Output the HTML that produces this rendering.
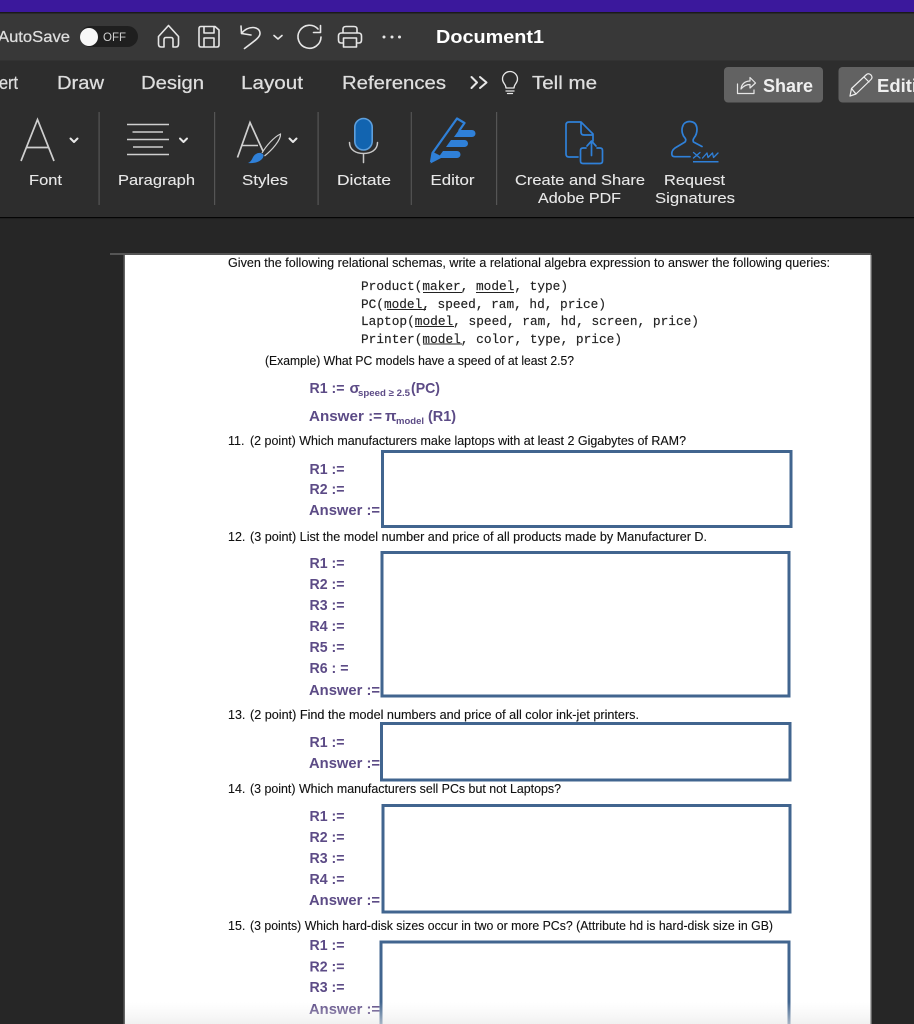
<!DOCTYPE html>
<html>
<head>
<meta charset="utf-8">
<style>
html,body{margin:0;padding:0;background:#262626;width:914px;height:1024px;overflow:hidden}
svg{display:block}
text{font-family:"Liberation Sans",sans-serif;white-space:pre}
.t{fill:#dedede;stroke:#dedede;stroke-width:.25;font-size:18px}
.l{fill:#e8e8e8;font-size:15px;stroke:#e8e8e8;stroke-width:.1}
.d{fill:#111;font-size:12.5px;stroke:#111;stroke-width:.12}
.m{fill:#222;font-family:"Liberation Mono",monospace;font-size:12.8px;stroke:#222;stroke-width:.15}
.p{fill:#5c4b86;font-size:15px;font-weight:bold}
.b{fill:none;stroke:#41658f;stroke-width:3}
.i{fill:none;stroke:#e6e6e6;stroke-width:1.6;stroke-linecap:round;stroke-linejoin:round}
.c{fill:none;stroke:#e8e8e8;stroke-width:2;stroke-linecap:round;stroke-linejoin:round}
.a{fill:none;stroke:#2f80d8;stroke-width:1.7;stroke-linecap:round;stroke-linejoin:round}
</style>
</head>
<body>
<svg width="914" height="1024" viewBox="0 0 914 1024" xmlns="http://www.w3.org/2000/svg">
<defs>
<linearGradient id="fade" x1="0" y1="0" x2="0" y2="1"><stop offset="0" stop-color="#eee" stop-opacity="0"/><stop offset="1" stop-color="#e8e8e8" stop-opacity=".6"/></linearGradient>
</defs>
<rect width="914" height="1024" fill="#262626"/>
<rect width="914" height="12" fill="#3b189c"/>
<rect y="12" width="914" height="1.5" fill="#1a1a1a"/>
<rect y="13.5" width="914" height="47" fill="#383838"/>
<rect y="60.5" width="914" height="157" fill="#2d2d2d"/>
<rect y="217" width="914" height="1.2" fill="#050505"/>

<!-- title bar -->
<text x="-2" y="42" class="t" style="font-size:16px" textLength="72" lengthAdjust="spacingAndGlyphs">AutoSave</text>
<rect x="80" y="26" width="58" height="21" rx="10.5" fill="#1f1f1f"/>
<circle cx="89" cy="37" r="9" fill="#f8f8f8"/>
<text x="103" y="41" style="font-size:12px;fill:#d0d0d0" textLength="23" lengthAdjust="spacingAndGlyphs">OFF</text>
<path class="i" d="M161 47Q158.500 47 158.500 44V36.500L168.500 25.500L178.500 36.500V44Q178.500 47 176 47H173V39.500Q173 37.500 171 37.500H166Q164 37.500 164 39.500V47Z"/>
<path class="i" d="M201 26.500H215L219 30V45Q219 47 217 47H201Q199 47 199 45V28.500Q199 26.500 201 26.500ZM204 27V33H214V27M204 47V38H214V47"/>
<path class="i" d="M241 26L241.500 33.500L251 35M241.500 33.500C248 25 260 26 260 33.500C260 37 256 40 244.500 48.500"/>
<path class="c" d="M274 35.500L278 39L282 35.500" style="stroke-width:1.6"/>
<path class="i" d="M318 29A11.500 11.500 0 1 0 321 37M320.500 25.500V32.500H313.500"/>
<path class="i" d="M343 33V29Q343 26.500 346 26.500H354Q357 26.500 357 29V33M343 43H341Q338.500 43 338.500 40V36Q338.500 33 341.500 33H358.500Q361.500 33 361.500 36V40Q361.500 43 359 43H357M343.500 38H356.500V47H343.500Z"/>
<circle cx="384" cy="37" r="1.500" fill="#e6e6e6"/><circle cx="392" cy="37" r="1.500" fill="#e6e6e6"/><circle cx="399.500" cy="37" r="1.500" fill="#e6e6e6"/>
<text x="436" y="43" style="font-size:18px;font-weight:bold;fill:#fff" textLength="108" lengthAdjust="spacingAndGlyphs">Document1</text>

<!-- tabs -->
<text x="-1" y="89" class="t" textLength="19" lengthAdjust="spacingAndGlyphs">ert</text>
<text x="57" y="89" class="t" textLength="47" lengthAdjust="spacingAndGlyphs">Draw</text>
<text x="141" y="89" class="t" textLength="63" lengthAdjust="spacingAndGlyphs">Design</text>
<text x="241" y="89" class="t" textLength="62" lengthAdjust="spacingAndGlyphs">Layout</text>
<text x="342" y="89" class="t" textLength="104" lengthAdjust="spacingAndGlyphs">References</text>
<path class="c" d="M471.500 77L477 82.500L471.500 88M480 77L486.500 82.500L480 88"/>
<path class="i" d="M506 88C506 84 502.500 83.500 502.500 79A7.500 7.500 0 0 1 517.500 79C517.500 83.500 514 84 514 88ZM506 91H514M507.500 93.500H512.500" style="stroke-width:1.3"/>
<text x="532" y="89" class="t" textLength="65" lengthAdjust="spacingAndGlyphs">Tell me</text>
<rect x="724" y="67" width="99" height="35.500" rx="4" fill="#626262"/>
<rect x="838.500" y="67" width="90" height="35.500" rx="4" fill="#626262"/>
<path class="i" d="M737.500 84V93.500H754V90M741 89C741.500 84 745 81 750 81V77.500L755.500 83L750 88V84.500C746.500 84.500 743.500 86 741 89Z" style="stroke-width:1.2"/>
<text x="763" y="92" class="t" style="fill:#efefef;font-weight:bold;stroke:none" textLength="50" lengthAdjust="spacingAndGlyphs">Share</text>
<path class="i" d="M850 96L851.500 88.500L866.500 74.500Q868.500 72.800 871 75Q873 77.500 871 79.500L856 94ZM851.500 88.500L856 94M864 77L869 82" style="stroke-width:1.2;stroke:#eee"/>
<text x="877" y="92" class="t" style="fill:#efefef;font-weight:bold;stroke:none" textLength="40" lengthAdjust="spacingAndGlyphs">Editi</text>

<!-- separators -->
<g fill="#555"><rect x="98.500" y="112" width="1.2" height="93"/><rect x="214" y="112" width="1.2" height="93"/><rect x="317.500" y="112" width="1.2" height="93"/><rect x="410.700" y="112" width="1.2" height="93"/><rect x="496" y="112" width="1.2" height="93"/></g>

<!-- ribbon icons -->
<path d="M21 161L37.500 119.500L54 161M26.500 147.500H48.500" fill="none" stroke="#cfcfcf" stroke-width="1.7"/>
<path class="c" d="M70.500 138.500L74 142L77.500 138.500"/>
<g stroke="#cfcfcf" stroke-width="1.500"><path d="M127 124.500H169M132.500 132H163M127 139.500H169M133 147H163M127 154.500H169"/></g>
<path class="c" d="M180 138.500L183.500 142L187 138.500"/>
<path d="M237.500 157.500L250 122.500L263 151" fill="none" stroke="#cfcfcf" stroke-width="1.700"/>
<path d="M241 145.500H258" stroke="#cfcfcf" stroke-width="1.500"/>
<path d="M262 153C266 146 274 137 280.500 134C281 140 272 150 264.500 156" fill="#2d2d2d" stroke="#cfcfcf" stroke-width="1.200"/>
<path d="M248 163C253 161 252 156 256 154C259 152 262.500 153 263.500 155C264 160 256 164 248 163Z" fill="#2f80d8"/>
<path class="c" d="M289.500 138.500L293 142L296.500 138.500"/>
<rect x="354.800" y="118.500" width="17.400" height="31.500" rx="8.700" fill="#1264b0" stroke="#5e9fdc" stroke-width="1.600"/>
<path d="M349.500 142.500C349.500 150 356 153.500 363.500 153.500C371 153.500 377.500 150 377.500 142.500M363.500 153.500V162.500" fill="none" stroke="#c8c8c8" stroke-width="1.500" stroke-linecap="round"/>
<path d="M431 162L432.500 153L457 118.500L464.500 123L459 131" fill="none" stroke="#2f80d8" stroke-width="2.200" stroke-linejoin="round"/>
<path d="M430.500 163.500L443 157L433 152Z" fill="#2f80d8"/>
<path d="M459 130H472A3.500 3.500 0 0 1 472 137H454Z" fill="#2f80d8"/>
<path d="M451 140H464.500A3.500 3.500 0 0 1 464.500 147H446Z" fill="#2f80d8"/>
<path d="M443 151H457A3.500 3.500 0 0 1 457 158H438Z" fill="#2f80d8"/>
<path class="a" d="M578 157H569Q566 157 566 154V125Q566 122 569 122H581L593 134V141M581 122V132Q581 135 584 135H593"/>
<path class="a" d="M586 148H583Q580.500 148 580.500 150.500V161Q580.500 163.500 583 163.500H600Q602.500 163.500 602.500 161V150.500Q602.500 148 600 148H597M591.500 155.500V141.500M587 146L591.500 141L596 146"/>
<path class="a" d="M702 146.500L693.500 142Q692.500 140 694 138C698 133 699 122 690 121.500C681 121 680 133 685 138Q686.500 140 685 142L675 148Q671 151 672 155Q672.500 156.700 675 156.700H690"/>
<path class="a" d="M693.500 152.500L700 158M700 152.500L693.500 158M702.500 158L707 153L708 157.500L712.500 153L713.500 157.500L718 153" style="stroke-width:1.300"/>
<rect x="693" y="161" width="25.500" height="1.500" fill="#2f80d8"/>

<!-- ribbon labels -->
<text x="29" y="185" class="l" textLength="33" lengthAdjust="spacingAndGlyphs">Font</text>
<text x="118" y="185" class="l" textLength="77" lengthAdjust="spacingAndGlyphs">Paragraph</text>
<text x="242" y="185" class="l" textLength="46" lengthAdjust="spacingAndGlyphs">Styles</text>
<text x="337" y="185" class="l" textLength="54" lengthAdjust="spacingAndGlyphs">Dictate</text>
<text x="430.500" y="185" class="l" textLength="44" lengthAdjust="spacingAndGlyphs">Editor</text>
<text x="515" y="185" class="l" textLength="130" lengthAdjust="spacingAndGlyphs">Create and Share</text>
<text x="538" y="203" class="l" textLength="83" lengthAdjust="spacingAndGlyphs">Adobe PDF</text>
<text x="664" y="185" class="l" textLength="61" lengthAdjust="spacingAndGlyphs">Request</text>
<text x="655" y="203" class="l" textLength="80" lengthAdjust="spacingAndGlyphs">Signatures</text>

<!-- document -->
<rect x="110" y="253" width="761" height="2" fill="#555"/>
<rect x="123.500" y="255" width="1.500" height="769" fill="#666"/>
<rect x="125" y="255" width="745.500" height="769" fill="#fff"/>
<rect x="870.500" y="255" width="1.500" height="769" fill="#666"/>

<g style="filter:blur(.25px)">
<text x="228" y="267" class="d" textLength="602" lengthAdjust="spacingAndGlyphs">Given the following relational schemas, write a relational algebra expression to answer the following queries:</text>
<text x="361" y="290" class="m" textLength="207" lengthAdjust="spacingAndGlyphs">Product(maker, model, type)</text>
<text x="361" y="308" class="m" textLength="245" lengthAdjust="spacingAndGlyphs">PC(model, speed, ram, hd, price)</text>
<text x="361" y="325" class="m" textLength="338" lengthAdjust="spacingAndGlyphs">Laptop(model, speed, ram, hd, screen, price)</text>
<text x="361" y="343" class="m" textLength="261" lengthAdjust="spacingAndGlyphs">Printer(model, color, type, price)</text>
<g stroke="#222" stroke-width="1" fill="none"><path d="M423 292.500H462M476 292.500H514M387 309.500H426M415 326.500H454M423 344H462"/></g>
<text x="265" y="365" class="d" textLength="309" lengthAdjust="spacingAndGlyphs">(Example) What PC models have a speed of at least 2.5?</text>
<text x="309.500" y="393" class="p" textLength="35" lengthAdjust="spacingAndGlyphs">R1 :=</text>
<text x="349.500" y="393" class="p">σ</text>
<text x="358" y="396" class="p" style="font-size:9.5px" textLength="52" lengthAdjust="spacingAndGlyphs">speed ≥ 2.5</text>
<text x="411" y="393" class="p" textLength="29" lengthAdjust="spacingAndGlyphs">(PC)</text>
<text x="309" y="421" class="p" textLength="73" lengthAdjust="spacingAndGlyphs">Answer :=</text>
<text x="385" y="421" class="p">π</text>
<text x="396" y="424" class="p" style="font-size:9.500px" textLength="28" lengthAdjust="spacingAndGlyphs">model</text>
<text x="428" y="421" class="p" textLength="28" lengthAdjust="spacingAndGlyphs">(R1)</text>

<text x="228" y="445" class="d">11.</text><text x="250" y="445" class="d" textLength="436" lengthAdjust="spacingAndGlyphs">(2 point) Which manufacturers make laptops with at least 2 Gigabytes of RAM?</text>
<text x="309.500" y="474" class="p" textLength="35" lengthAdjust="spacingAndGlyphs">R1 :=</text><text x="309.500" y="494" class="p" textLength="35" lengthAdjust="spacingAndGlyphs">R2 :=</text>
<text x="309" y="515" class="p" textLength="71" lengthAdjust="spacingAndGlyphs">Answer :=</text>
<rect x="382.500" y="451.500" width="408.500" height="75" class="b"/>

<text x="228" y="541" class="d">12.</text><text x="250" y="541" class="d" textLength="457" lengthAdjust="spacingAndGlyphs">(3 point) List the model number and price of all products made by Manufacturer D.</text>
<text x="309.500" y="568" class="p" textLength="35" lengthAdjust="spacingAndGlyphs">R1 :=</text><text x="309.500" y="589" class="p" textLength="35" lengthAdjust="spacingAndGlyphs">R2 :=</text><text x="309.500" y="610" class="p" textLength="35" lengthAdjust="spacingAndGlyphs">R3 :=</text><text x="309.500" y="631" class="p" textLength="35" lengthAdjust="spacingAndGlyphs">R4 :=</text><text x="309.500" y="652" class="p" textLength="35" lengthAdjust="spacingAndGlyphs">R5 :=</text><text x="309.500" y="673" class="p" textLength="39" lengthAdjust="spacingAndGlyphs">R6 : =</text>
<text x="309" y="695" class="p" textLength="71" lengthAdjust="spacingAndGlyphs">Answer :=</text>
<rect x="382" y="552.500" width="407" height="143.500" class="b"/>

<text x="228" y="719" class="d">13.</text><text x="250" y="719" class="d" textLength="389" lengthAdjust="spacingAndGlyphs">(2 point) Find the model numbers and price of all color ink-jet printers.</text>
<text x="309.500" y="747" class="p" textLength="35" lengthAdjust="spacingAndGlyphs">R1 :=</text>
<text x="309" y="768" class="p" textLength="71" lengthAdjust="spacingAndGlyphs">Answer :=</text>
<rect x="381.500" y="723.500" width="408.500" height="56.500" class="b"/>

<text x="228" y="793" class="d">14.</text><text x="250" y="793" class="d" textLength="311" lengthAdjust="spacingAndGlyphs">(3 point) Which manufacturers sell PCs but not Laptops?</text>
<text x="309.500" y="821" class="p" textLength="35" lengthAdjust="spacingAndGlyphs">R1 :=</text><text x="309.500" y="842" class="p" textLength="35" lengthAdjust="spacingAndGlyphs">R2 :=</text><text x="309.500" y="863" class="p" textLength="35" lengthAdjust="spacingAndGlyphs">R3 :=</text><text x="309.500" y="884" class="p" textLength="35" lengthAdjust="spacingAndGlyphs">R4 :=</text>
<text x="309" y="905" class="p" textLength="71" lengthAdjust="spacingAndGlyphs">Answer :=</text>
<rect x="383" y="805.500" width="407" height="106.500" class="b"/>

<text x="228" y="930" class="d">15.</text><text x="250" y="930" class="d" textLength="523" lengthAdjust="spacingAndGlyphs">(3 points) Which hard-disk sizes occur in two or more PCs? (Attribute hd is hard-disk size in GB)</text>
<text x="309.500" y="950" class="p" textLength="35" lengthAdjust="spacingAndGlyphs">R1 :=</text><text x="309.500" y="971.500" class="p" textLength="35" lengthAdjust="spacingAndGlyphs">R2 :=</text><text x="309.500" y="992" class="p" textLength="35" lengthAdjust="spacingAndGlyphs">R3 :=</text>
<text x="309" y="1014" class="p" textLength="71" lengthAdjust="spacingAndGlyphs">Answer :=</text>
<rect x="381" y="942" width="408" height="90" class="b"/>
</g>
<rect x="125" y="1002" width="745.500" height="22" fill="url(#fade)"/>
</svg>
</body>
</html>
